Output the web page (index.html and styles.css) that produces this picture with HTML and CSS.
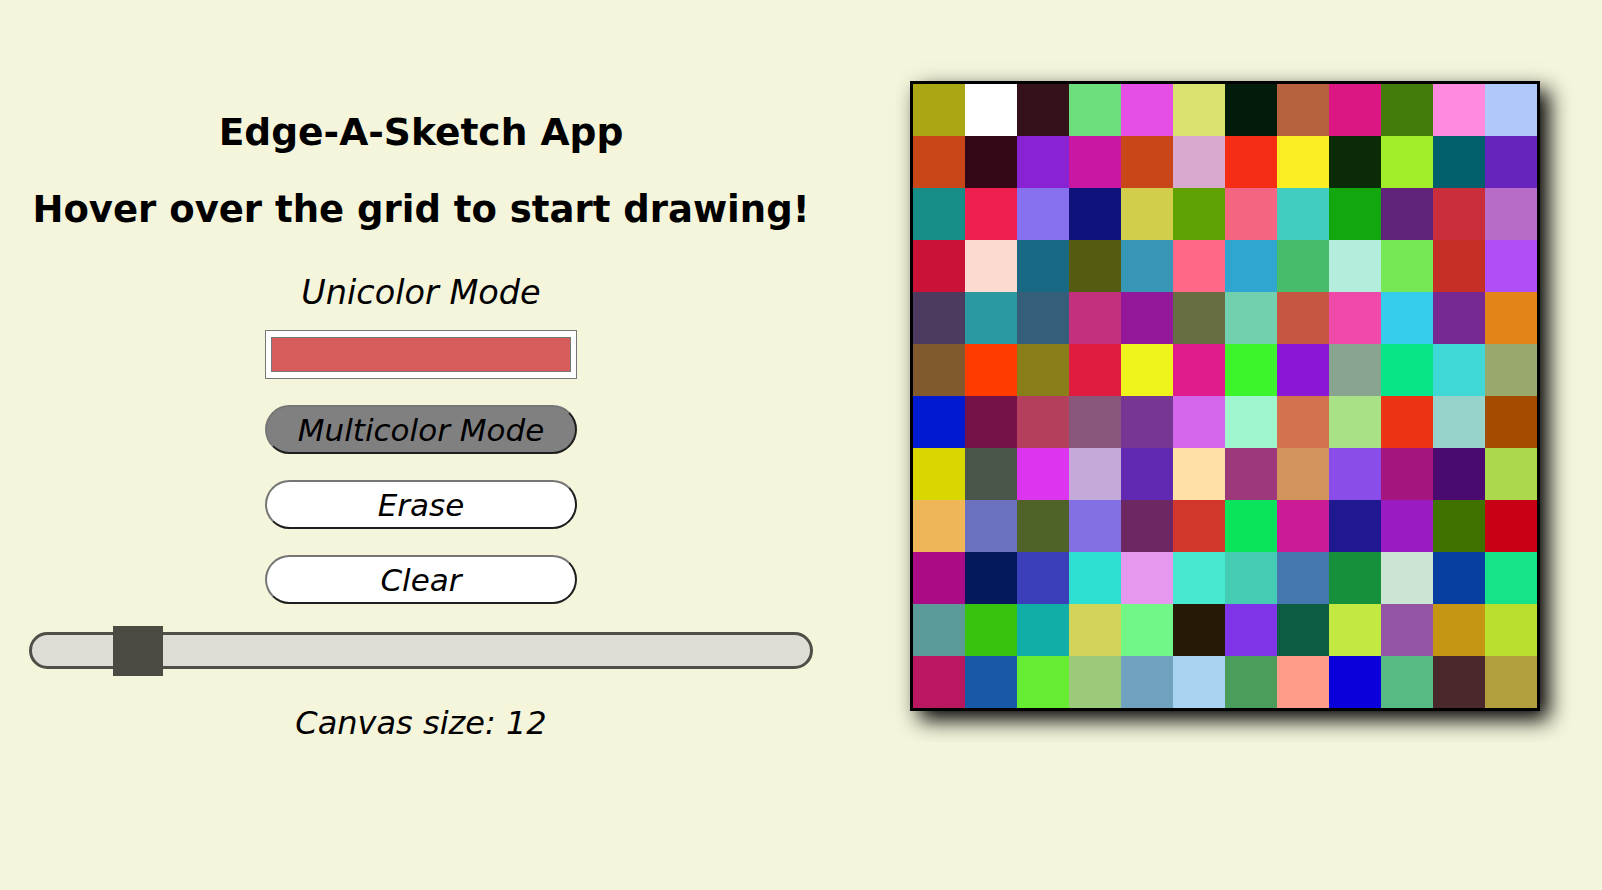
FILE: index.html
```html
<!DOCTYPE html>
<html lang="en">
<head>
<meta charset="utf-8">
<title>Edge-A-Sketch App</title>
<link rel="stylesheet" href="styles.css">
</head>
<body>
<main class="app">
  <section class="controls">
    <h1 class="title">Edge-A-Sketch App</h1>
    <h2 class="subtitle">Hover over the grid to start drawing!</h2>
    <p class="mode-label">Unicolor Mode</p>
    <input class="color-picker" type="color" value="#d75c5c">
    <button class="btn btn-active">Multicolor Mode</button>
    <button class="btn">Erase</button>
    <button class="btn">Clear</button>
    <input class="size-slider" type="range" min="1" max="100" value="12">
    <p class="size-label">Canvas size: 12</p>
  </section>
  <section class="grid" id="grid"></section>
</main>
<script src="app.js"></script>
</body>
</html>
```

FILE: app.js
```js
const colors = [
  "#aba613","#ffffff","#35121a","#6de07e","#e54fe6","#d9e26f","#021b0b","#b8613e","#dc1784","#437c0b","#ff8ae0","#b1c9fa",
  "#c94618","#350818","#8822d2","#c917a4","#c94618","#d9aad0","#f52d14","#fbee24","#0a2b05","#a2ee2a","#02606d","#6724bd",
  "#168e87","#f01f4f","#8871ef","#10127c","#d2cd4a","#60a203","#f36580","#41cdbf","#12a60f","#61247a","#ca2e3c","#b76dc8",
  "#c91235","#fcdad0","#196984","#565b12","#3796b6","#ff6889","#2ea6d0","#47bd6c","#b5eddd","#76e755","#c52f25","#b14ef8",
  "#4c3b5e","#2a99a2","#355f79","#c3307e","#921799","#676e44","#73d0ae","#c65642","#ef4aa9","#36ccec","#772993","#e28418",
  "#805a2d","#ff3b00","#8a7e1b","#df1c3f","#eef41c","#e01b8c","#3ef52b","#8a16d6","#89a58f","#08e589","#40d8d7","#99a86b",
  "#001ad1","#751248","#b43f5d","#88577b","#773694","#d366ea","#9ff5cd","#d3724f","#a9e186","#ec3313","#98d3cb","#a44b00",
  "#dad600","#4a564a","#dd34f0","#c3aad8","#6128b2","#ffe1a5","#9d397a","#d2945a","#8b4de9","#a4167e","#4b0a70","#acd84e",
  "#efb657","#6b71bf","#4f6228","#826fe2","#6d2762","#d3362d","#0ae45c","#cc1b96","#1f1890","#9b1bc3","#407200","#c90014",
  "#ab0c86","#04185c","#3b3fba","#2ee0d1","#e697ee","#47e8d0","#45cbb4","#4577af","#17903c","#cce4d3","#073fa0","#16e288",
  "#5c9a97","#38c30f","#11aea9","#d2d45a","#71f688","#261905","#7f35e7","#0c5c44","#c2e942","#9455a6","#c49613","#badf2c",
  "#b9175f","#1759a5","#66ed33","#9bcb7a","#6fa2bf","#a8d4f2","#4a9d5a","#ff9b89","#0a00db","#55bb82","#4a292d","#b29f3e"
];
const grid = document.getElementById("grid");
colors.forEach(c => {
  const cell = document.createElement("div");
  cell.className = "cell";
  cell.style.background = c;
  grid.appendChild(cell);
});
```

FILE: styles.css
```css
html, body {
  margin: 0;
  padding: 0;
}
body {
  background: #f5f5dc;
  font-family: "DejaVu Sans", Verdana, sans-serif;
  color: #000;
}
.app {
  display: flex;
  align-items: flex-start;
}
.controls {
  width: 842px;
  padding-top: 111px;
  display: flex;
  flex-direction: column;
  align-items: center;
}
.title, .subtitle {
  margin: 0;
  font-size: 37px;
  font-weight: bold;
  line-height: 43px;
}
.title {
  font-size: 37.6px;
}
.subtitle {
  margin-top: 34px;
}
.mode-label {
  margin: 42px 0 0;
  font-size: 33.5px;
  font-style: italic;
  line-height: 39px;
}
.color-picker {
  -webkit-appearance: none;
  appearance: none;
  box-sizing: border-box;
  width: 312px;
  height: 49px;
  margin: 18px 0 0;
  padding: 6px 5px;
  border: 1px solid #767676;
  background: #fff;
}
.color-picker::-webkit-color-swatch-wrapper {
  padding: 0;
}
.color-picker::-webkit-color-swatch {
  border: 1px solid #777;
}
.btn {
  box-sizing: border-box;
  width: 312px;
  height: 49px;
  margin-top: 26px;
  padding: 0;
  border: 2px solid;
  border-color: #767676 #1e1e1e #1e1e1e #767676;
  border-radius: 25px;
  background: #fff;
  font-family: "DejaVu Sans", Verdana, sans-serif;
  font-size: 31px;
  font-style: italic;
  color: #000;
}
.btn-active {
  background: #808080;
}
.size-slider {
  -webkit-appearance: none;
  appearance: none;
  box-sizing: border-box;
  width: 784px;
  height: 37px;
  margin: 28px 0 0;
  border: 3px solid #4f4f47;
  border-radius: 19px;
  background: #ddddd5;
}
.size-slider::-webkit-slider-thumb {
  -webkit-appearance: none;
  appearance: none;
  width: 50px;
  height: 50px;
  background: #4b4b43;
}
.size-label {
  margin: 36px 0 0;
  font-size: 32px;
  font-style: italic;
  line-height: 37px;
}
.grid {
  margin: 81px 0 0 68px;
  display: grid;
  grid-template-columns: repeat(12, 52px);
  grid-auto-rows: 52px;
  border: 3px solid #000;
  box-shadow: 9px 9px 20px #000;
}
```
